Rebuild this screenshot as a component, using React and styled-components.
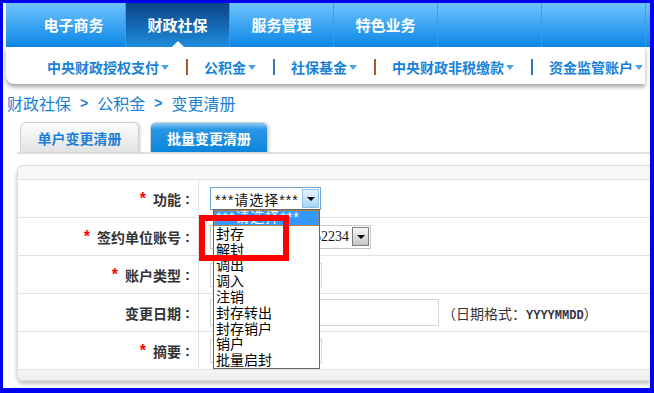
import styled, { createGlobalStyle } from 'styled-components';

const GlobalStyle = createGlobalStyle`
  * { box-sizing: border-box; }
  html, body { margin: 0; padding: 0; }
  body {
    background: #0000f2;
    font-family: "Noto Sans CJK SC", "Liberation Sans", sans-serif;
  }
`

const Frame = styled.div`
  width: 654px;
  height: 393px;
  padding: 3px 4px 5px 3px;
  background: #0000f2;
`
const Page = styled.div`
  height: 385px;
  background: #fff;
  overflow: hidden;
`
const TopNav = styled.div`
  display: flex;
  height: 44px;
  margin-left: 3px;
  padding-left: 16px;
  background: linear-gradient(#6fc4ff, #0a86e6);
`
const NavTab = styled.div`
  position: relative;
  width: 104px;
  display: flex;
  align-items: center;
  justify-content: center;
  border-right: 1px solid #3d9de6;
  color: #fff;
  font-size: 15px;
  font-weight: bold;
  line-height: 20px;
  background: ${p => (p.$active ? 'linear-gradient(#0a4488, #1f8cdb)' : 'transparent')};
  &::after {
    content: '';
    display: ${p => (p.$active ? 'block' : 'none')};
    position: absolute;
    left: 50%;
    bottom: 0;
    margin-left: -6px;
    border-left: 6px solid transparent;
    border-right: 6px solid transparent;
    border-bottom: 6px solid #fff;
  }
`
const SubNav = styled.div`
  display: flex;
  align-items: center;
  height: 37px;
  margin: 0 5px 0 3px;
  padding: 2px 0 0 41px;
  background: #fff;
  border-bottom-left-radius: 8px;
  box-shadow: 0 3px 4px rgba(0, 0, 0, 0.35);
`
const SubItem = styled.div`
  display: flex;
  align-items: center;
  color: #1a82d8;
  font-size: 14px;
  font-weight: bold;
  line-height: 18px;
`
const Caret = styled.span`
  margin-left: 2px;
  margin-top: 2px;
  border-left: 4px solid transparent;
  border-right: 4px solid transparent;
  border-top: 5px solid #4aa2e2;
`
const SubSep = styled.span`
  width: 2px;
  height: 16px;
  margin: 0 16px 0 17px;
  background: linear-gradient(90deg, #a0522d 50%, #3a7cc0 50%);
`
const Crumbs = styled.div`
  display: flex;
  align-items: center;
  height: 20px;
  margin-top: 9px;
  padding-left: 4px;
  color: #1a7fd6;
  font-size: 16px;
  line-height: 20px;
`
const Chevron = styled.span`
  margin: 0 9px;
  font-family: "Liberation Sans", sans-serif;
  font-weight: bold;
  font-size: 14px;
`
const TabBar = styled.div`
  display: flex;
  gap: 11px;
  margin: 9px 0 0 14px;
  padding-left: 3px;
  border-bottom: 2px solid #e0e0e0;
`
const Tab = styled.div`
  width: ${p => p.$w}px;
  height: 30px;
  display: flex;
  align-items: center;
  justify-content: center;
  border: 1px solid #cfcfcf;
  border-bottom: 0;
  border-radius: 6px 6px 0 0;
  box-shadow: 2px 0 2px rgba(0, 0, 0, 0.12);
  font-size: 14px;
  font-weight: bold;
  color: ${p => (p.$active ? '#fff' : '#1a7fd6')};
  background: ${p =>
    p.$active
      ? 'linear-gradient(#8ccbf6, #2a96e6 22%, #0a84dc)'
      : 'linear-gradient(#fdfdfd, #e2e2e2)'};
`
const Panel = styled.div`
  margin: 11px 0 0 14px;
  border: 1px solid #dcdcdc;
  border-right: 0;
  border-radius: 6px 0 0 6px;
  box-shadow: 0 3px 4px rgba(0, 0, 0, 0.25);
`
const PanelHead = styled.div`
  height: 13px;
  background: #f8f8f8;
  border-top-left-radius: 6px;
`
const Row = styled.div`
  display: grid;
  grid-template-columns: 181px 1fr;
  height: 38px;
  border-top: 1px solid #e3e3e3;
`
const Label = styled.div`
  display: flex;
  align-items: center;
  justify-content: flex-end;
  padding-right: 8px;
  border-right: 1px solid #e3e3e3;
  color: #333;
  font-size: 14px;
  font-weight: bold;
`
const Colon = styled.span`
  margin-left: 4px;
  font-family: "Liberation Sans", sans-serif;
  font-size: 15px;
`
const Star = styled.span`
  margin-right: 7px;
  color: #f00;
  font-family: "Liberation Sans", sans-serif;
  font-size: 16px;
`
const Cell = styled.div`
  display: flex;
  align-items: center;
  padding-left: 11px;
`
const SelectWrap = styled.div`
  position: relative;
`
const SelectBox = styled.div`
  display: flex;
  align-items: center;
  width: ${p => p.$w}px;
  height: ${p => p.$h}px;
  padding: 1px;
  border: 1px solid ${p => (p.$blue ? '#6aa6d8' : '#c8c8c8')};
  background: #fff;
`
const SelectText = styled.div`
  flex: 1;
  overflow: hidden;
  white-space: nowrap;
  padding: 0 ${p => (p.$right ? '3px' : '0')} 0 ${p => (p.$right ? '0' : '3px')};
  text-align: ${p => (p.$right ? 'right' : 'left')};
  font-family: ${p =>
    p.$serif ? '"Liberation Serif", serif' : '"Liberation Sans", "Noto Sans CJK SC", sans-serif'};
  font-size: 14px;
  letter-spacing: ${p => (p.$serif ? '0' : '1px')};
  color: #111;
`
const DropBtn = styled.div`
  width: 17px;
  height: 19px;
  display: flex;
  align-items: center;
  justify-content: center;
  border: 1px solid ${p => (p.$blue ? '#8ebfe4' : '#7a7a7a')};
  background: ${p =>
    p.$blue ? 'linear-gradient(#e6f5fe, #a6d6f5)' : 'linear-gradient(#f6f6f6, #c6c6c6)'};
  &::after {
    content: '';
    border-left: 4px solid transparent;
    border-right: 4px solid transparent;
    border-top: 4px solid #000;
  }
`
const Input = styled.div`
  width: ${p => p.$w}px;
  height: ${p => p.$h}px;
  border: 1px solid #d6d6d6;
  background: #fff;
`
const Hint = styled.span`
  margin-left: 3px;
  color: #333;
  font-size: 14px;
`
const Mono = styled.span`
  font-family: "Liberation Mono", monospace;
  font-size: 12px;
  font-weight: bold;
  color: #334;
`
const OptionList = styled.div`
  position: absolute;
  left: 3px;
  top: 22px;
  z-index: 2;
  width: 107px;
  border: 1px solid #666;
  background: #fff;
`
const Option = styled.div`
  height: 15.8px;
  padding-left: 2px;
  font-size: 14px;
  line-height: 15.8px;
  color: ${p => (p.$on ? '#fff' : '#000')};
  background: ${p => (p.$on ? '#3399ff' : '#fff')};
  outline: ${p => (p.$on ? '1px dotted #c08040' : 'none')};
  outline-offset: -1px;
  font-family: ${p => (p.$on ? '"Liberation Sans", "Noto Sans CJK SC", sans-serif' : 'inherit')};
  letter-spacing: ${p => (p.$on ? '1px' : '0')};
  white-space: nowrap;
`
const Mark = styled.div`
  position: absolute;
  left: -11px;
  top: 28px;
  z-index: 3;
  width: 90px;
  height: 46px;
  border: 6px solid #f00;
`
const Footer = styled.div`
  height: 11px;
  border-top: 1px solid #e3e3e3;
  border-bottom-left-radius: 6px;
  background: linear-gradient(#f7f7f7, #ececec);
`

const navTabs = ['电子商务', '财政社保', '服务管理', '特色业务', '', ''];
const subItems = ['中央财政授权支付', '公积金', '社保基金', '中央财政非税缴款', '资金监管账户'];
const options = ['封存', '解封', '调出', '调入', '注销', '封存转出', '封存销户', '销户', '批量启封'];

const App = () => {
  return (
    <Frame>
      <GlobalStyle />
      <Page>
        <TopNav>
          {navTabs.map((t, i) => (
            <NavTab key={i} $active={i === 1}>{t}</NavTab>
          ))}
        </TopNav>
        <SubNav>
          {subItems.map((s, i) => (
            <SubItem key={s}>
              {i > 0 && <SubSep />}
              {s}
              <Caret />
            </SubItem>
          ))}
        </SubNav>
        <Crumbs>
          财政社保<Chevron>&gt;</Chevron>公积金<Chevron>&gt;</Chevron>变更清册
        </Crumbs>
        <TabBar>
          <Tab $w={119}>单户变更清册</Tab>
          <Tab $w={118} $active>批量变更清册</Tab>
        </TabBar>
        <Panel>
          <PanelHead />
          <Row>
            <Label><Star>*</Star>功能<Colon>:</Colon></Label>
            <Cell>
              <SelectWrap>
                <SelectBox $w={111} $h={23} $blue>
                  <SelectText>***请选择***</SelectText>
                  <DropBtn $blue />
                </SelectBox>
                <OptionList>
                  <Option $on>***请选择***</Option>
                  {options.map(o => (
                    <Option key={o}>{o}</Option>
                  ))}
                </OptionList>
                <Mark />
              </SelectWrap>
            </Cell>
          </Row>
          <Row>
            <Label><Star>*</Star>签约单位账号<Colon>:</Colon></Label>
            <Cell>
              <SelectBox $w={161} $h={24}>
                <SelectText $right $serif>420010000000052234</SelectText>
                <DropBtn />
              </SelectBox>
            </Cell>
          </Row>
          <Row>
            <Label><Star>*</Star>账户类型<Colon>:</Colon></Label>
            <Cell>
              <Input $w={112} $h={24} />
            </Cell>
          </Row>
          <Row>
            <Label>变更日期<Colon>:</Colon></Label>
            <Cell>
              <Input $w={229} $h={27} />
              <Hint>（日期格式：<Mono>YYYYMMDD</Mono>）</Hint>
            </Cell>
          </Row>
          <Row>
            <Label><Star>*</Star>摘要<Colon>:</Colon></Label>
            <Cell>
              <Input $w={112} $h={24} />
            </Cell>
          </Row>
          <Footer />
        </Panel>
      </Page>
    </Frame>
  );
};

export default App;
